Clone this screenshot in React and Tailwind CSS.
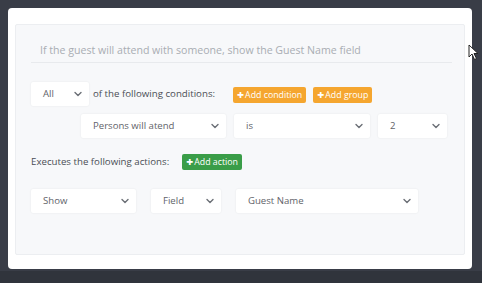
// Conditional logic rule editor

import React from 'react';

const font = { fontFamily: '"Open Sans", "Noto Sans", sans-serif' };

function Chevron() {
  return (
    <svg width="8" height="6" viewBox="0 0 8 6" className="shrink-0">
      <path d="M1 1.5 L4 4.5 L7 1.5" stroke="#6b6f76" strokeWidth="1.4" fill="none" strokeLinecap="round" strokeLinejoin="round" />
    </svg>
  );
}

function Select({ label, className }) {
  return (
    <div className={`flex items-center justify-between h-[24px] bg-white rounded-[2px] shadow-[0_0_2px_rgba(0,0,0,0.08)] pl-[12px] pr-[7px] text-[9.6px] text-[#5f636a] ${className}`}>
      <span>{label}</span>
      <Chevron />
    </div>
  );
}

function AddButton({ label, color }) {
  return (
    <div className={`flex items-center h-[16px] px-[4px] rounded-[2px] text-white text-[8.8px] leading-none ${color}`}>
      <span className="font-extrabold text-[12px] mr-[1px] leading-none">+</span>
      {label}
    </div>
  );
}

export default function App() {
  return (
    <div className="w-[482px] h-[283px] bg-[#393d47] flex flex-col overflow-hidden" style={font}>
      <div className="flex flex-1">
        <div className="w-[8px]" />
        <div className="w-[464px] mt-[8px] h-[261px] bg-white rounded-[4px] pt-[16px] px-[7px]">
          <div className="h-[231px] bg-[#f7f8fa] border border-[#eceef1] rounded-[2px] pt-[14px] pl-[15px] pr-[12px]">
            {/* Title input */}
            <div className="h-[24px] border-b border-[#e8eaed] flex items-center pl-[9px] text-[10.6px] text-[#a9adb3]">
              If the guest will attend with someone, show the Guest Name field
            </div>

            {/* Conditions header */}
            <div className="flex items-center mt-[19px] h-[24px]">
              <Select label="All" className="w-[58px]" />
              <span className="ml-[4px] text-[9.7px] text-[#4a4e55]">of the following conditions:</span>
              <div className="ml-[18px] flex gap-[7px] mt-[2px]">
                <AddButton label="Add condition" color="bg-[#f5a62f]" />
                <AddButton label="Add group" color="bg-[#f5a62f]" />
              </div>
            </div>

            {/* Condition row */}
            <div className="flex items-center mt-[8px] pl-[50px] gap-[8px]">
              <Select label="Persons will atend" className="w-[145px]" />
              <Select label="is" className="w-[136px]" />
              <Select label="2" className="w-[69px]" />
            </div>

            {/* Actions header */}
            <div className="flex items-center mt-[16px] h-[16px]">
              <span className="text-[9.7px] text-[#4a4e55]">Executes the following actions:</span>
              <div className="ml-[13px]">
                <AddButton label="Add action" color="bg-[#3a9d48]" />
              </div>
            </div>

            {/* Action row */}
            <div className="flex items-center mt-[19px]">
              <Select label="Show" className="w-[105px]" />
              <Select label="Field" className="w-[70px] ml-[15px]" />
              <Select label="Guest Name" className="w-[182px] ml-[15px]" />
            </div>
          </div>
        </div>
        <div className="flex-1 relative">
          <svg width="12" height="17" viewBox="0 0 12 17" className="absolute left-[-4px] top-[44px]">
            <path d="M1 1 L1 13 L4 10 L6.5 15.5 L8.5 14.5 L6 9.5 L10 9.5 Z" fill="#ffffff" stroke="#222" strokeWidth="1" strokeLinejoin="round" />
          </svg>
        </div>
      </div>
      <div className="h-[12px] bg-[#30343c]" />
    </div>
  );
}
